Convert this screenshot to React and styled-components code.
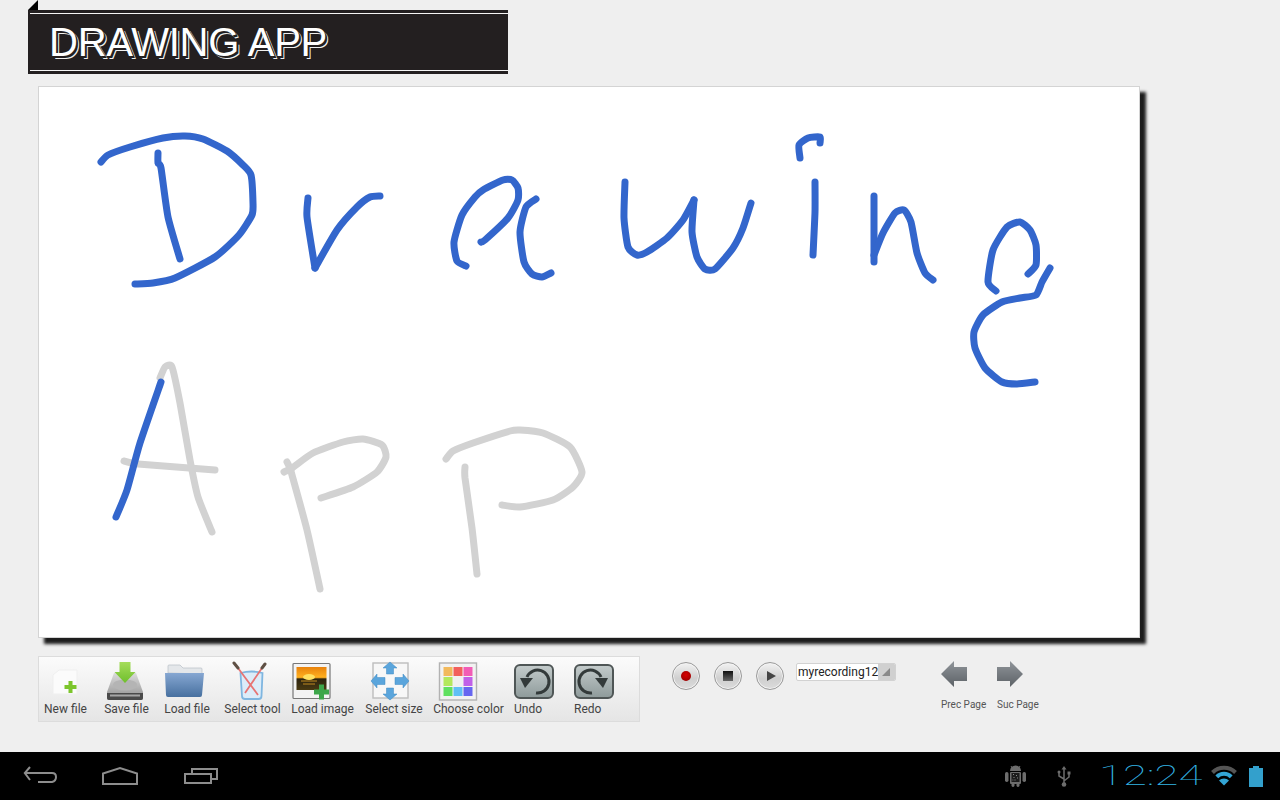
import React from "react";
import styled, { createGlobalStyle } from "styled-components";

const Global = createGlobalStyle`
  html, body { margin: 0; padding: 0; background: #efefef; }
  #root { width: 1280px; height: 800px; overflow: hidden; }
`;

const Page = styled.div`
  width: 1280px; height: 800px; display: flex; flex-direction: column;
  background: #efefef; font-family: Roboto, "Liberation Sans", sans-serif;
`;
const Main = styled.main`
  flex: 1; display: flex; flex-direction: column; align-items: flex-start; padding-top: 10px;
`;
const TitleBar = styled.header`
  position: relative; width: 480px; height: 64px; margin-left: 28px; background: #231f20;
  padding: 3px 0 3px 2px; box-sizing: border-box;
  &::before {
    content: ""; position: absolute; left: 0; top: -10px; width: 0; height: 0;
    border-style: solid; border-width: 0 0 10px 10px; border-color: transparent transparent #000 transparent;
  }
`;
const TitleInner = styled.div`
  height: 100%; box-sizing: border-box; border-top: 1px solid #f4f4f4; border-bottom: 1px solid #f4f4f4;
  display: flex; align-items: center; padding-left: 19px;
`;
const TitleText = styled.h1`
  margin: 0; font: 400 40px/1 "Liberation Sans", Arial, sans-serif; color: #fff; letter-spacing: -0.25px;
  text-shadow: 2px 2px 0 #231f20, 3px 3px 0 #f0f0f0;
`;
const Canvas = styled.section`
  width: 1102px; height: 552px; margin: 12px 0 0 38px; box-sizing: border-box;
  background: #fff; border: 1px solid #d4d4d4; box-shadow: 6px 6px 3px rgba(0,0,0,.88);
  svg { display: block; }
`;
const BottomRow = styled.div`
  display: flex; align-items: flex-start; margin: 18px 0 0 38px;
`;
const Toolbar = styled.div`
  width: 602px; height: 66px; box-sizing: border-box; display: flex; align-items: flex-start;
  padding: 5px 0 0 5px; border: 1px solid #dcdcdc;
  background: linear-gradient(#fbfbfb, #e5e5e5);
`;
const ToolItem = styled.div`
  flex: none; width: ${p => p.$w}px; margin-left: ${p => p.$m || 0}px;
  display: flex; flex-direction: column; align-items: ${p => (p.$left ? "flex-start" : "center")};
  svg { display: block; overflow: visible; flex: none; }
`;
const ToolLabel = styled.span`
  font-size: 12px; line-height: 14px; color: #444; white-space: nowrap;
`;
const Media = styled.div`
  display: flex; align-items: flex-start; margin: 6px 0 0 32px; gap: 14px;
`;
const RoundBtn = styled.button`
  width: 28px; height: 28px; padding: 0; box-sizing: border-box; border-radius: 50%;
  border: 1px solid #9a9a9a; display: flex; align-items: center; justify-content: center;
  background: linear-gradient(#f2f2f2, #cfcfcf 60%, #dcdcdc);
  box-shadow: inset 0 0 0 1px #f4f4f4;
`;
const RecDot = styled.i`
  width: 10px; height: 10px; border-radius: 50%; background: radial-gradient(circle at 50% 40%, #d80000, #8c0000);
`;
const StopSq = styled.i`
  width: 10px; height: 10px; background: linear-gradient(#111, #666);
`;
const PlayTri = styled.i`
  width: 0; height: 0; margin-left: 2px; border-style: solid; border-width: 5.5px 0 5.5px 9px;
  border-color: transparent transparent transparent #444;
`;
const Spinner = styled.div`
  width: 100px; height: 18px; margin: 1px 0 0 -2px; box-sizing: border-box; display: flex;
  border: 1px solid #d2d2d2; border-radius: 2px; background: #fff; overflow: hidden;
`;
const SpinnerText = styled.span`
  flex: 1; font-size: 12px; line-height: 16px; padding-left: 1px; color: #222; white-space: nowrap;
`;
const SpinnerArrow = styled.span`
  width: 17px; position: relative; background: #d0d0d0;
  &::after {
    content: ""; position: absolute; right: 5px; bottom: 4px; width: 0; height: 0; border-style: solid;
    border-width: 0 0 8px 8px; border-color: transparent transparent #8a8a8a transparent;
  }
`;
const PageNav = styled.div`
  display: flex; gap: 10px; margin: 5px 0 0 45px; align-items: flex-start;
`;
const NavItem = styled.div`
  display: flex; flex-direction: column; align-items: flex-start; width: ${p => p.$w}px;
  svg { display: block; margin-bottom: 11px; }
`;
const NavLabel = styled.span`
  font-size: 10px; line-height: 14px; color: #555; white-space: nowrap;
`;
const StatusBar = styled.footer`
  height: 48px; background: #000; display: flex; align-items: center; justify-content: space-between;
  padding: 0 17px 0 24px; svg { display: block; overflow: visible; }
`;
const Tray = styled.div`
  display: flex; align-items: center;
`;
const TraySlot = styled.div`
  flex: none; margin-left: ${p => p.$m}px;
`;
const Clock = styled.span`
  display: block; width: 99px; margin-left: 28px; font: 100 28px/1 Roboto, Inter, sans-serif; color: #33b5e5;
  white-space: nowrap; transform: scaleX(1.56); transform-origin: left center;
`;

const BLUE = "#3366cc";
const GRAY = "#d2d2d2";
const strokes = [
  { c: GRAY, p: "160,378 165,367 172,367 180,403 190,460 198,497 212,532" },
  { c: GRAY, p: "124,461 138,464 215,470" },
  { c: BLUE, p: "161,382 140,443 127,490 116,517" },
  { c: GRAY, p: "287,462 290,468 292,475 307,530 320,589" },
  { c: GRAY, p: "284,472 292,468 313,453 343,442 363,439 382,445 386,457 377,472 353,487 321,498" },
  { c: GRAY, p: "446,459 453,451 473,443 510,431 520,430 543,433 570,447 582,472 573,487 553,500 520,507 502,505" },
  { c: GRAY, p: "465,467 465,478 472,528 477,574" },
  { c: BLUE, p: "101,162 108,155 130,147 163,138 185,136 203,139 227,151 243,165 251,175 253,203 252,215 239,235 215,257 175,278 153,283 135,284" },
  { c: BLUE, p: "158,153 158,163 161,168 168,217 180,259" },
  { c: BLUE, p: "308,198 307,217 315,268" },
  { c: BLUE, p: "315,268 337,230 357,207 370,197 380,196" },
  { c: BLUE, p: "466,266 457,261 454,242 462,215 475,197 483,190 503,180 512,180 518,188 518,200 508,218 485,240 481,242" },
  { c: BLUE, p: "536,199 526,207 520,232 524,262 532,274 542,277 551,273" },
  { c: BLUE, p: "625,182 624,218 628,247 637,255 647,252 667,238 683,220 694,200" },
  { c: BLUE, p: "694,200 692,232 697,257 705,269 715,269 733,248 743,228 751,203" },
  { c: BLUE, p: "800,158 799,145 808,138 820,137 820,143" },
  { c: BLUE, p: "815,182 815,212 813,255" },
  { c: BLUE, p: "874,196 874,262" },
  { c: BLUE, p: "874,255 883,233 895,213 904,210 911,222 917,253 925,273 933,280" },
  { c: BLUE, p: "996,291 988,282 993,250 1007,227 1020,222 1030,230 1036,245 1036,265 1028,274" },
  { c: BLUE, p: "1050,268 1042,282 1036,295 1020,298 1002,302 983,315 974,332 975,348 985,368 1002,382 1017,384 1035,382" },
];

// Smooth a pen stroke through its sampled points (Catmull-Rom to cubic Bezier).
function strokePath(str) {
  const pts = str.split(" ").map(s => s.split(",").map(Number));
  const k = 0.1;
  let d = `M${pts[0][0]} ${pts[0][1]}`;
  for (let i = 0; i < pts.length - 1; i++) {
    const a = pts[Math.max(i - 1, 0)], b = pts[i], c = pts[i + 1], e = pts[Math.min(i + 2, pts.length - 1)];
    d += `C${b[0] + (c[0] - a[0]) * k} ${b[1] + (c[1] - a[1]) * k} ${c[0] - (e[0] - b[0]) * k} ${c[1] - (e[1] - b[1]) * k} ${c[0]} ${c[1]}`;
  }
  return d;
}

const Plus = ({ x, y, s = 6, c = "#7cc52c" }) => (
  <path d={`M${x - s / 3} ${y - s}h${(2 * s) / 3}v${(2 * s) / 3}h${(2 * s) / 3}v${(2 * s) / 3}h-${(2 * s) / 3}v${(2 * s) / 3}h-${(2 * s) / 3}v-${(2 * s) / 3}h-${(2 * s) / 3}v-${(2 * s) / 3}h${(2 * s) / 3}z`} fill={c} />
);

const NewIcon = () => (
  <svg width="40" height="40" viewBox="0 0 40 40">
    <path d="M7 13l6-5h18v24H7z" fill="#fbfbfb" stroke="#efefef" />
    <Plus x={24.5} y={25} s={6} />
  </svg>
);
const SaveIcon = () => (
  <svg width="40" height="40" viewBox="0 0 40 40">
    <defs>
      <linearGradient id="disk" x1="0" y1="0" x2="0" y2="1"><stop offset="0" stopColor="#dcdcdc" /><stop offset="1" stopColor="#8f8f8f" /></linearGradient>
      <linearGradient id="green" x1="0" y1="0" x2="0" y2="1"><stop offset="0" stopColor="#a5dc5a" /><stop offset="1" stopColor="#6fbf2c" /></linearGradient>
    </defs>
    <path d="M7 11h22l7 19v6q0 2-2 2H2q-2 0-2-2v-6z" fill="url(#disk)" />
    <path d="M0 31h36v5q0 2-2 2H2q-2 0-2-2z" fill="#4a4a4a" />
    <rect x="3" y="32.500" width="30" height="2" fill="#a5a5a5" />
    <ellipse cx="18" cy="23" rx="12" ry="5.500" fill="#b4b4b4" />
    <path d="M12.500 0h11v10h5L18 21 7.500 10h5z" fill="url(#green)" />
  </svg>
);
const FolderIcon = () => (
  <svg width="40" height="40" viewBox="0 0 40 40">
    <defs><linearGradient id="fold" x1="0" y1="0" x2="0" y2="1"><stop offset="0" stopColor="#86a7d2" /><stop offset="1" stopColor="#47709f" /></linearGradient></defs>
    <path d="M1 11V4q0-1 1-1h11l3 3h18q1 0 1 1v5z" fill="#e4e7ea" stroke="#b8bfc6" strokeWidth=".7" />
    <path d="M-2 11H37l-2 22q0 2-2 2H1q-2 0-2-2z" fill="url(#fold)" />
  </svg>
);
const CupIcon = () => (
  <svg width="40" height="40" viewBox="0 0 40 40">
    <path d="M7.500 11q11 -3 22 0l-1 23q0 3-3 3H12q-3 0-3-3z" fill="#dcecf9" stroke="#7fb6e0" strokeWidth="1.800" />
    <path d="M5 6L25 33M29 6L12 31" stroke="#e77474" strokeWidth="1.800" fill="none" />
    <path d="M1 1L5 6M32 2L29 6" stroke="#5f5044" strokeWidth="3" strokeLinecap="round" />
  </svg>
);
const ImageIcon = () => (
  <svg width="40" height="40" viewBox="0 0 40 40">
    <defs><linearGradient id="sun" x1="0" y1="0" x2="0" y2="1"><stop offset="0" stopColor="#e8820c" /><stop offset=".45" stopColor="#ffb020" /><stop offset=".52" stopColor="#2c2410" /><stop offset="1" stopColor="#4a3a12" /></linearGradient></defs>
    <rect x="-10" y="1.500" width="37" height="35" fill="#f3f3f3" stroke="#777" strokeWidth="1.200" rx="1" />
    <rect x="-6.500" y="5" width="30" height="23" fill="url(#sun)" />
    <ellipse cx="6" cy="15" rx="6" ry="3" fill="#ffe060" />
    <path d="M-2 19h16M0 22h12" stroke="#c08a20" strokeWidth="1" />
    <Plus x={18.5} y={30} s={7.5} c="#3da64a" />
  </svg>
);
const SizeIcon = () => (
  <svg width="40" height="40" viewBox="0 0 40 40">
    <rect x="-1" y="1" width="35" height="35" fill="#f7f7f7" stroke="#bdbdbd" strokeWidth="1.400" />
    <g fill="#5aa5dc" stroke="#3d88c2" strokeWidth=".5">
      <path d="M16 0l7 6h-3.500v6h-7V6H9z" />
      <path d="M16 38l7-6h-3.500v-6h-7v6H9z" />
      <path d="M-3 19l6-7v3.500h8v7H3V26z" />
      <path d="M35 19l-6-7v3.500h-8v7h8V26z" />
    </g>
  </svg>
);
const palette = ["#f2b95c", "#f2605c", "#f25cb5", "#b3e85c", "#f0f0f0", "#c060e8", "#60e060", "#60c0f5", "#6666f0"];
const ColorIcon = () => (
  <svg width="40" height="40" viewBox="0 0 40 40">
    <rect x="-9.500" y="1" width="37" height="37" fill="#f2f2f2" stroke="#b2b2b2" strokeWidth="1.400" />
    {palette.map((c, i) => (
      <rect key={c} x={-5.5 + (i % 3) * 10} y={5 + Math.floor(i / 3) * 10} width="9" height="9" fill={c} />
    ))}
  </svg>
);
const UndoIcon = ({ flip }) => {
  const id = flip ? "redoBg" : "undoBg";
  return (
    <svg width="40" height="40" viewBox="0 0 40 40">
      <defs><linearGradient id={id} x1="0" y1="0" x2="0" y2="1"><stop offset="0" stopColor="#c4cccc" /><stop offset="1" stopColor="#8e9a9a" /></linearGradient></defs>
      <rect x="1" y="3" width="38" height="33" rx="5" fill={`url(#${id})`} stroke="#4f5656" strokeWidth="2" />
      <g transform={flip ? "translate(40 0) scale(-1 1)" : undefined}>
        <path d="M22 31A11.500 11.500 0 1 0 13 15" fill="none" stroke="#333a3a" strokeWidth="3" />
        <path d="M6 16h13l-8 10z" fill="#333a3a" />
      </g>
    </svg>
  );
};
const PageArrow = ({ flip }) => {
  const id = flip ? "nextGr" : "prevGr";
  return (
    <svg width="26" height="26" viewBox="0 0 26 26">
      <defs><linearGradient id={id} x1="0" y1="0" x2="0" y2="1"><stop offset="0" stopColor="#90959a" /><stop offset="1" stopColor="#5c6166" /></linearGradient></defs>
      <path d={flip ? "M13 0l13 13-13 13v-6H0V6h13z" : "M13 0L0 13l13 13v-6h13V6H13z"} fill={`url(#${id})`} />
    </svg>
  );
};

const KEY = "#8d8d8d";
const BackKey = () => (
  <svg width="32" height="20" viewBox="0 0 32 20" fill="none" stroke={KEY} strokeWidth="2">
    <path d="M6 1L0.800 7 6 14M1 7h27q4 0 4 4t-4 5H14" />
  </svg>
);
const HomeKey = () => (
  <svg width="36" height="18" viewBox="0 0 36 18" fill="none" stroke={KEY} strokeWidth="2">
    <path d="M1 17V6.500L18 1l17 5.500V17z" />
  </svg>
);
const RecentKey = () => (
  <svg width="34" height="16" viewBox="0 0 34 16" fill="none" stroke={KEY} strokeWidth="2">
    <rect x="1" y="6" width="26" height="9" />
    <path d="M8 5V1h25v10h-5" />
  </svg>
);
const AndroidIcon = () => (
  <svg width="21" height="22" viewBox="0 0 21 22">
    <g fill="#6d6d6d">
      <path d="M5 6a5.500 5.500 0 0 1 11 0z" />
      <path d="M6 1L7.500 3.500M15 1l-1.500 2.500" stroke="#6d6d6d" />
      <rect x="0" y="7" width="3.500" height="10" rx="1.700" />
      <rect x="17.500" y="7" width="3.500" height="10" rx="1.700" />
      <rect x="5" y="7" width="11" height="12" rx="1" />
      <rect x="6.500" y="17" width="3" height="5" rx="1.400" />
      <rect x="11.500" y="17" width="3" height="5" rx="1.400" />
    </g>
    <rect x="6.500" y="8" width="8" height="9" fill="#1c1c1c" />
    <path d="M8 9.500h1M11 10.500h1M8.500 12.500h1M12 13h1M9.500 15h1M7.500 15h.8" stroke="#8a8a8a" />
  </svg>
);
const UsbIcon = () => (
  <svg width="14" height="21" viewBox="0 0 14 21" fill="none" stroke="#6d6d6d" strokeWidth="1.500">
    <path d="M7 3v14M7 13L2 10V7M7 15l5-4V8" />
    <path d="M7 0l2.500 3.500h-5z" fill="#6d6d6d" stroke="none" />
    <circle cx="7" cy="18.500" r="2.300" fill="#6d6d6d" stroke="none" />
    <circle cx="2" cy="6" r="1.500" fill="#6d6d6d" stroke="none" />
    <rect x="10.500" y="5.500" width="3" height="3" fill="#6d6d6d" stroke="none" />
  </svg>
);
const WifiIcon = () => (
  <svg width="26" height="20" viewBox="0 0 26 20" fill="none">
    <path d="M1.500 6.500a16.300 16.300 0 0 1 23 0" stroke="#555" strokeWidth="4" />
    <path d="M5.800 10.800a10.200 10.200 0 0 1 14.400 0" stroke="#33a5d5" strokeWidth="4" />
    <path d="M13 19.500l-5-5a7 7 0 0 1 10 0z" fill="#33a5d5" />
  </svg>
);
const BatteryIcon = () => (
  <svg width="14" height="21" viewBox="0 0 14 21">
    <path d="M4 0h6v2h4v19H0V2h4z" fill="#33a0cc" />
  </svg>
);

const tools = [
  { l: "New file", w: 43, I: NewIcon },
  { l: "Save file", w: 45, m: 17, I: SaveIcon },
  { l: "Load file", w: 46, m: 15, I: FolderIcon },
  { l: "Select tool", w: 57, m: 14, I: CupIcon },
  { l: "Load image", w: 63, m: 10, I: ImageIcon },
  { l: "Select size", w: 58, m: 11, I: SizeIcon },
  { l: "Choose color", w: 71, m: 10, I: ColorIcon },
  { l: "Undo", w: 40, m: 10, left: true, I: UndoIcon },
  { l: "Redo", w: 40, m: 20, left: true, I: () => <UndoIcon flip /> },
];

export default function App() {
  return (
    <Page>
      <Global />
      <Main>
        <TitleBar>
          <TitleInner><TitleText>DRAWING APP</TitleText></TitleInner>
        </TitleBar>
        <Canvas>
          <svg width="1100" height="550" viewBox="39 87 1100 550" fill="none" strokeLinecap="round" strokeLinejoin="round">
            {strokes.map(s => (
              <path key={s.p} d={strokePath(s.p)} stroke={s.c} strokeWidth="7" />
            ))}
          </svg>
        </Canvas>
        <BottomRow>
          <Toolbar>
            {tools.map(({ l, w, m, left, I }) => (
              <ToolItem key={l} $w={w} $m={m} $left={left}>
                <I />
                <ToolLabel>{l}</ToolLabel>
              </ToolItem>
            ))}
          </Toolbar>
          <Media>
            <RoundBtn aria-label="Record"><RecDot /></RoundBtn>
            <RoundBtn aria-label="Stop"><StopSq /></RoundBtn>
            <RoundBtn aria-label="Play"><PlayTri /></RoundBtn>
            <Spinner>
              <SpinnerText>myrecording12</SpinnerText>
              <SpinnerArrow />
            </Spinner>
          </Media>
          <PageNav>
            <NavItem $w={46}><PageArrow /><NavLabel>Prec Page</NavLabel></NavItem>
            <NavItem $w={42}><PageArrow flip /><NavLabel>Suc Page</NavLabel></NavItem>
          </PageNav>
        </BottomRow>
      </Main>
      <StatusBar>
        <Tray>
          <BackKey />
          <TraySlot $m={46}><HomeKey /></TraySlot>
          <TraySlot $m={46}><RecentKey /></TraySlot>
        </Tray>
        <Tray>
          <AndroidIcon />
          <TraySlot $m={31}><UsbIcon /></TraySlot>
          <Clock>12:24</Clock>
          <TraySlot $m={13}><WifiIcon /></TraySlot>
          <TraySlot $m={12}><BatteryIcon /></TraySlot>
        </Tray>
      </StatusBar>
    </Page>
  );
}
